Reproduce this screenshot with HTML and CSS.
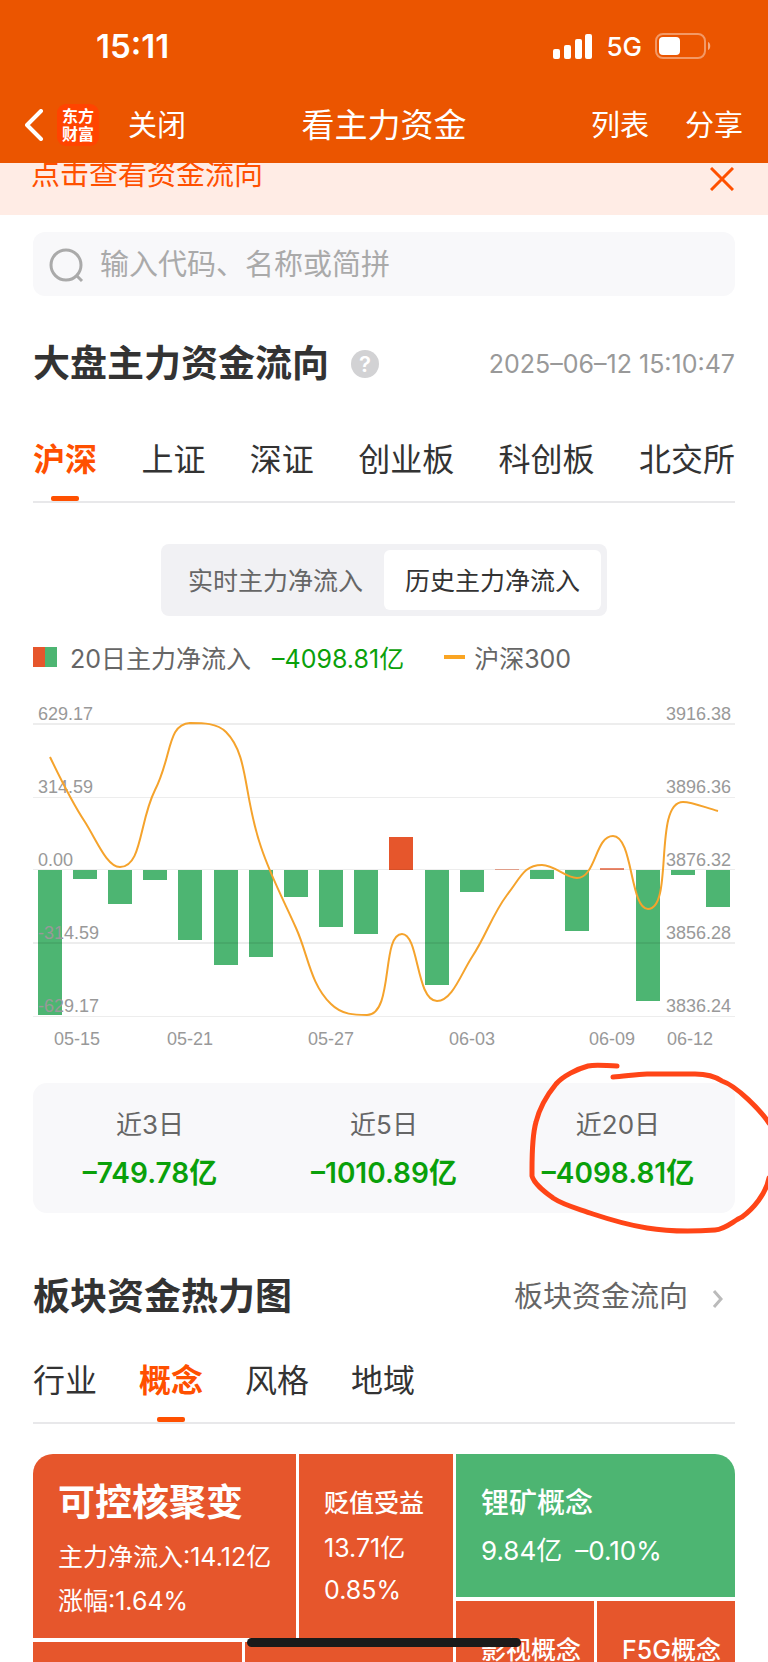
FILE: index.html
```html
<!DOCTYPE html>
<html lang="zh-CN">
<head>
    <meta charset="UTF-8">
    <meta name="viewport" content="width=device-width, initial-scale=1.0">
    <title>看主力资金</title>
    <link rel="stylesheet" href="styles.css">
</head>
<body>
    <div class="app">
        <header class="header">
            <div class="status">
                <span class="time">15:11</span>
                <div class="status-right">
                    <svg width="40" height="26" viewBox="0 0 40 26" fill="#fff">
                        <rect x="0" y="16" width="7" height="10" rx="2"/>
                        <rect x="11" y="12" width="7" height="14" rx="2"/>
                        <rect x="22" y="6" width="7" height="20" rx="2"/>
                        <rect x="32" y="1" width="7" height="25" rx="2"/>
                    </svg>
                    <span class="network">5G</span>
                    <svg width="56" height="26" viewBox="0 0 56 26">
                        <rect x="1" y="1" width="49" height="24" rx="7" fill="none" stroke="#fff" stroke-opacity=".4" stroke-width="2"/>
                        <rect x="4" y="4" width="21" height="18" rx="4" fill="#fff"/>
                        <path d="M53 9c3 1 3 7 0 8z" fill="#fff" fill-opacity=".5"/>
                    </svg>
                </div>
            </div>
            <nav class="nav">
                <div class="nav-left">
                    <button class="back" type="button" aria-label="返回">
                        <svg width="20" height="32" viewBox="0 0 20 32"><path d="M16 2L2 16l14 14" fill="none" stroke="#fff" stroke-width="4" stroke-linecap="round" stroke-linejoin="round"/></svg>
                    </button>
                    <span class="logo">东方<br>财富</span>
                    <button class="nav-btn" type="button">关闭</button>
                </div>
                <div class="nav-title">看主力资金</div>
                <div class="nav-right">
                    <button class="nav-btn" type="button">列表</button>
                    <button class="nav-btn" type="button">分享</button>
                </div>
            </nav>
        </header>

        <div class="notice">
            <a href="#flow">点击查看资金流向</a>
            <button class="notice-close" type="button" aria-label="关闭提示">
                <svg width="24" height="24" viewBox="0 0 24 24"><path d="M1 1l22 22M23 1L1 23" stroke="#ff5000" stroke-width="3"/></svg>
            </button>
        </div>

        <main class="main">
            <form class="search">
                <svg width="36" height="36" viewBox="0 0 36 36" fill="none" stroke="#aaa" stroke-width="3"><circle cx="17" cy="18" r="15"/><path d="M27 28l6 6"/></svg>
                <input type="text" aria-label="搜索股票" placeholder="输入代码、名称或简拼">
            </form>

            <div class="section-head" id="flow">
                <h1>大盘主力资金流向</h1>
                <button class="help" type="button" aria-label="帮助">?</button>
                <time class="updated">2025–06–12 15:10:47</time>
            </div>

            <div class="tabs tabs-market">
                <button class="tab active" type="button">沪深</button>
                <button class="tab" type="button">上证</button>
                <button class="tab" type="button">深证</button>
                <button class="tab" type="button">创业板</button>
                <button class="tab" type="button">科创板</button>
                <button class="tab" type="button">北交所</button>
            </div>

            <div class="toggle">
                <button type="button">实时主力净流入</button>
                <button class="on" type="button">历史主力净流入</button>
            </div>

            <div class="legend">
                <i class="legend-bar"></i>
                <span>20日主力净流入</span>
                <span class="legend-value">–4098.81亿</span>
                <i class="legend-line"></i>
                <span>沪深300</span>
            </div>

            <svg class="chart" viewBox="0 0 702 356">
                <!-- 主力净流入 -->
                <g class="bar-down">
                    <rect x="5" y="170" width="24" height="145"/>
                    <rect x="40" y="170" width="24" height="9"/>
                    <rect x="75" y="170" width="24" height="34"/>
                    <rect x="110" y="170" width="24" height="10"/>
                    <rect x="145" y="170" width="24" height="70"/>
                    <rect x="181" y="170" width="24" height="95"/>
                    <rect x="216" y="170" width="24" height="87"/>
                    <rect x="251" y="170" width="24" height="27"/>
                    <rect x="286" y="170" width="24" height="57"/>
                    <rect x="321" y="170" width="24" height="64"/>
                    <rect x="392" y="170" width="24" height="115"/>
                    <rect x="427" y="170" width="24" height="22"/>
                    <rect x="497" y="170" width="24" height="9"/>
                    <rect x="532" y="170" width="24" height="61"/>
                    <rect x="603" y="170" width="24" height="131"/>
                    <rect x="638" y="170" width="24" height="5"/>
                    <rect x="673" y="170" width="24" height="37"/>
                </g>
                <g class="bar-up">
                    <rect x="356" y="137" width="24" height="33"/>
                    <rect x="462" y="169" width="24" height="1" opacity=".5"/>
                    <rect x="567" y="168" width="24" height="2" opacity=".7"/>
                </g>
                <g class="grid">
                    <rect y="23" width="702" height="2"/>
                    <rect y="97" width="702" height="1"/>
                    <rect y="169" width="702" height="1"/>
                    <rect y="242" width="702" height="2"/>
                    <rect y="316" width="702" height="1"/>
                </g>
                <g class="axis">
                    <text x="5" y="20">629.17</text>
                    <text x="5" y="93">314.59</text>
                    <text x="5" y="166">0.00</text>
                    <text x="5" y="239">-314.59</text>
                    <text x="5" y="312">-629.17</text>
                </g>
                <g class="axis" text-anchor="end">
                    <text x="698" y="20">3916.38</text>
                    <text x="698" y="93">3896.36</text>
                    <text x="698" y="166">3876.32</text>
                    <text x="698" y="239">3856.28</text>
                    <text x="698" y="312">3836.24</text>
                </g>
                <g class="axis" text-anchor="middle">
                    <text x="44" y="345">05-15</text>
                    <text x="157" y="345">05-21</text>
                    <text x="298" y="345">05-27</text>
                    <text x="439" y="345">06-03</text>
                    <text x="579" y="345">06-09</text>
                    <text x="657" y="345">06-12</text>
                </g>
                <!-- 沪深300 -->
                <path class="line" d="M17 57C29 82 40 104 52 122C64 141 74 167 87 167C109 167 106 122 122 90C139 57 134 24 157 23C170 23 184 23 193 32C216 55 210 95 228 147C238 177 252 203 263 228C275 254 277 284 298 304C309 315 322 315 334 315C361 315 348 234 369 234C386 234 383 301 404 301C419 301 428 274 439 257C453 236 459 215 474 195C488 177 491 165 509 165C522 165 532 178 544 178C563 178 562 136 580 136C600 136 597 209 615 209C641 209 620 102 650 102C660 102 673 108 685 111"/>
            </svg>

            <div class="stats">
                <div class="stat">
                    <span class="stat-label">近3日</span>
                    <strong>–749.78亿</strong>
                </div>
                <div class="stat">
                    <span class="stat-label">近5日</span>
                    <strong>–1010.89亿</strong>
                </div>
                <div class="stat">
                    <span class="stat-label">近20日</span>
                    <strong>–4098.81亿</strong>
                </div>
                <svg class="mark" width="245" height="176" viewBox="0 0 245 176">
                    <path d="M94 6C84 6 74 4 65 6C54 9 40 16 33 24C24 35 16 50 13 62C9 76 9 94 9 110V116C11 124 22 132 30 138C42 146 57 149 70 154C88 160 105 165 124 168C142 171 165 172 192 170C203 169 210 161 219 157C230 149 243 134 246 118M246 63C238 51 214 26 199 21C190 15 180 14 172 14H124C112 14 100 17 90 17"/>
                </svg>
            </div>

            <div class="section-head section-heat">
                <h2>板块资金热力图</h2>
                <a class="more" href="#heatmap">板块资金流向
                    <svg width="12" height="18" viewBox="0 0 12 18"><path d="M2 1l7 8-7 8" fill="none" stroke="#bbb" stroke-width="3"/></svg>
                </a>
            </div>

            <div class="tabs tabs-board">
                <button class="tab" type="button">行业</button>
                <button class="tab active" type="button">概念</button>
                <button class="tab" type="button">风格</button>
                <button class="tab" type="button">地域</button>
            </div>

            <div class="heatmap" id="heatmap">
                <div class="heat-left">
                    <div class="heat-row heat-top">
                        <div class="cell cell-large">
                            <h3>可控核聚变</h3>
                            <p>主力净流入:14.12亿</p>
                            <p>涨幅:1.64%</p>
                        </div>
                        <div class="cell cell-mid">
                            <h3>贬值受益</h3>
                            <p>13.71亿</p>
                            <p>0.85%</p>
                        </div>
                    </div>
                    <div class="heat-row heat-bottom">
                        <div class="cell"></div>
                        <div class="cell"></div>
                    </div>
                </div>
                <div class="heat-right">
                    <div class="cell cell-green">
                        <h3>锂矿概念</h3>
                        <p>9.84亿&ensp;–0.10%</p>
                    </div>
                    <div class="heat-row heat-bottom">
                        <div class="cell cell-small"><h3>影视概念</h3></div>
                        <div class="cell cell-small"><h3>F5G概念</h3></div>
                    </div>
                </div>
            </div>
        </main>
        <div class="home-bar"></div>
    </div>
</body>
</html>
```
FILE: styles.css
```css
* {
    box-sizing: border-box;
}
body {
    margin: 0;
    font-family: Inter, "Noto Sans CJK SC", sans-serif;
    color: #333;
    background-color: #fff;
}
h1, h2, h3, p {
    margin: 0;
}
button {
    padding: 0;
    border: none;
    background: none;
    font-family: inherit;
    color: inherit;
    cursor: pointer;
}
a {
    color: inherit;
    text-decoration: none;
}
svg {
    display: block;
    flex-shrink: 0;
}
.app {
    position: relative;
    height: 100vh;
    overflow: hidden;
}

/* 顶部 */
.header {
    background-color: #eb5500;
    color: #fff;
}
.status {
    display: flex;
    align-items: center;
    justify-content: space-between;
    height: 86px;
    padding: 6px 57px 0 96px;
}
.time {
    font-size: 33px;
    font-weight: 600;
}
.status-right {
    display: flex;
    align-items: center;
    gap: 13px;
}
.network {
    font-size: 26px;
    font-weight: 500;
}
.nav {
    display: grid;
    grid-template-columns: 1fr auto 1fr;
    align-items: center;
    height: 77px;
    padding: 0 25px;
}
.nav-left, .nav-right {
    display: flex;
    align-items: center;
}
.nav-right {
    justify-content: flex-end;
    gap: 36px;
}
.nav-btn {
    padding-bottom: 4px;
    font-size: 29px;
}
.nav-title {
    padding-bottom: 4px;
    font-size: 33px;
}
.logo {
    width: 42px;
    height: 42px;
    margin: 0 29px 0 12px;
    padding-top: 3px;
    border-radius: 9px;
    background-color: #ff4400;
    font-size: 16px;
    font-weight: 700;
    line-height: 18px;
    text-align: center;
}
.notice {
    display: flex;
    align-items: flex-start;
    justify-content: space-between;
    height: 52px;
    padding: 0 34px 0 31px;
    overflow: hidden;
    background-color: #ffece5;
    color: #ff5000;
    font-size: 29px;
    line-height: 24px;
}
.notice-close {
    margin-top: 4px;
}

/* 内容 */
.main {
    padding: 0 33px;
}
.search {
    display: flex;
    align-items: center;
    gap: 15px;
    height: 64px;
    margin-top: 17px;
    padding: 1px 16px 0;
    border-radius: 12px;
    background-color: #f8f8fa;
}
.search input {
    flex: 1;
    min-width: 0;
    padding: 0;
    border: none;
    outline: none;
    background: none;
    font-family: inherit;
    font-size: 29px;
}
.search input::placeholder {
    color: #aaa;
}
.section-head {
    display: flex;
    align-items: center;
    height: 48px;
    margin-top: 44px;
}
.section-head h1, .section-head h2 {
    font-size: 37px;
    font-weight: 700;
    line-height: 48px;
}
.section-heat {
    margin-top: 60px;
}
.help {
    width: 28px;
    height: 28px;
    margin-left: 22px;
    border-radius: 50%;
    background-color: #d2d2d4;
    color: #fff;
    font-size: 22px;
    font-weight: 600;
    line-height: 28px;
}
.updated {
    margin-left: auto;
    color: #999;
    font-size: 25px;
}
.more {
    display: flex;
    align-items: center;
    gap: 24px;
    margin-left: auto;
    padding-right: 11px;
    color: #666;
    font-size: 29px;
    line-height: 44px;
}
.more svg {
    margin-top: 4px;
}
.tabs {
    display: flex;
    border-bottom: 2px solid #e8e8ea;
}
.tabs-market {
    justify-content: space-between;
    margin-top: 48px;
}
.tabs-board {
    gap: 42px;
    margin-top: 36px;
}
.tab {
    position: relative;
    padding-bottom: 17px;
    font-size: 32px;
    line-height: 48px;
}
.tab.active {
    color: #ff5000;
    font-weight: 700;
}
.tab.active::after {
    content: "";
    position: absolute;
    left: 50%;
    bottom: 0;
    width: 28px;
    height: 5px;
    margin-left: -14px;
    border-radius: 2px;
    background-color: #ff5000;
}
.toggle {
    display: flex;
    width: fit-content;
    margin: 41px auto 0;
    padding: 6px;
    border-radius: 8px;
    background-color: #f1f1f4;
}
.toggle button {
    width: 217px;
    height: 60px;
    padding-bottom: 3px;
    border-radius: 6px;
    color: #666;
    font-size: 25px;
}
.toggle .on {
    background-color: #fff;
    color: #333;
}
.legend {
    display: flex;
    align-items: center;
    height: 32px;
    margin-top: 25px;
    color: #666;
    font-size: 25px;
}
.legend-bar {
    width: 24px;
    height: 20px;
    margin-right: 13px;
    background: linear-gradient(90deg, #e6562c 50%, #4db572 50%);
}
.legend-value {
    margin: 0 40px 0 21px;
    color: #0aa00a;
}
.legend-line {
    width: 21px;
    height: 4px;
    margin-right: 9px;
    background-color: #faa523;
}

/* 图表 */
.chart {
    width: 100%;
    margin-top: 27px;
}
.bar-down {
    fill: #4db572;
}
.bar-up {
    fill: #e6562c;
}
.grid {
    fill: rgba(0, 0, 0, 0.07);
}
.axis {
    fill: #999;
    font-family: "Liberation Sans", Arial, sans-serif;
    font-size: 18px;
}
.line {
    fill: none;
    stroke: #f5a32c;
    stroke-width: 2;
}
.stats {
    position: relative;
    display: flex;
    margin-top: 27px;
    padding: 22px 0 16px;
    border-radius: 14px;
    background-color: #f8f8fa;
}
.stat {
    display: flex;
    flex: 1;
    flex-direction: column;
    gap: 4px;
    text-align: center;
}
.stat-label {
    color: #666;
    font-size: 26px;
    line-height: 40px;
}
.stat strong {
    color: #0aa00a;
    font-size: 28px;
    font-weight: 600;
    line-height: 48px;
}
.mark {
    position: absolute;
    top: -23px;
    right: -33px;
    fill: none;
    stroke: #ff4517;
    stroke-width: 5;
    stroke-linecap: round;
}

/* 热力图 */
.heatmap {
    display: grid;
    grid-template-columns: 420fr 279fr;
    gap: 3px;
    margin-top: 30px;
    border-radius: 20px;
    overflow: hidden;
    color: #fff;
}
.heat-left, .heat-right {
    display: flex;
    flex-direction: column;
    gap: 4px;
    min-width: 0;
}
.heat-row {
    display: grid;
    grid-template-columns: 1fr 1fr;
    gap: 3px;
}
.heat-top {
    grid-template-columns: 263fr 154fr;
    height: 184px;
}
.heat-bottom {
    min-height: 144px;
}
.cell {
    min-width: 0;
    padding: 25px 25px 0;
    background-color: #e6562c;
    font-size: 25px;
    white-space: nowrap;
}
.cell h3 {
    font-size: 25px;
    font-weight: 500;
    line-height: 48px;
}
.cell p {
    line-height: 44px;
}
.cell-large h3 {
    margin-bottom: 8px;
    font-size: 37px;
    font-weight: 700;
}
.cell-mid p {
    line-height: 42px;
}
.cell-green {
    height: 143px;
    background-color: #4db572;
}
.cell-green h3 {
    font-size: 28px;
}
.cell-green p {
    font-size: 26px;
    line-height: 48px;
}
.home-bar {
    position: absolute;
    bottom: 15px;
    left: 50%;
    width: 274px;
    height: 9px;
    margin-left: -137px;
    border-radius: 5px;
    background-color: #1a1a1a;
}
```
